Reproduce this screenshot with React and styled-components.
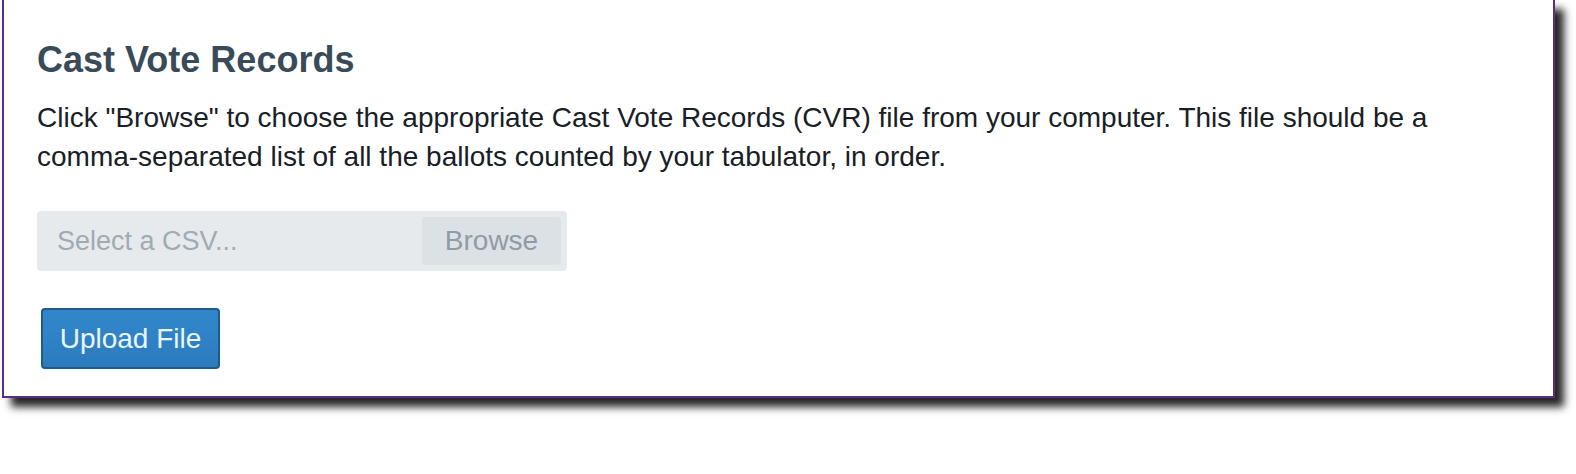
import React from 'react'
import styled, { createGlobalStyle } from 'styled-components'

const GlobalStyle = createGlobalStyle`
  html, body {
    margin: 0;
    padding: 0;
    background: #fff;
  }
  body {
    font-family: "Liberation Sans", Arial, sans-serif;
  }
`

const Page = styled.div`
  width: 1576px;
  height: 474px;
  overflow: hidden;
`

const Card = styled.section`
  box-sizing: border-box;
  margin-left: 2px;
  width: 1553px;
  height: 398px;
  background: #fff;
  border: 2px solid #5b2d82;
  border-top: none;
  box-shadow: 9px 9px 8px rgba(0, 0, 0, 0.85);
  padding: 38px 34px 0 33px;
`

const Title = styled.h2`
  margin: 0;
  font-size: 36px;
  line-height: 44px;
  font-weight: 700;
  color: #394b59;
`

const Text = styled.p`
  margin: 16px 0 0;
  font-size: 28px;
  line-height: 39px;
  color: #182026;
`

const FileInput = styled.label`
  box-sizing: border-box;
  margin-top: 35px;
  width: 530px;
  height: 60px;
  display: flex;
  align-items: center;
  justify-content: space-between;
  padding: 0 6px 0 20px;
  background: #e6eaed;
  border-radius: 4px;
`

const Placeholder = styled.span`
  font-size: 27px;
  color: #a0aab3;
`

const Browse = styled.span`
  box-sizing: border-box;
  width: 139px;
  height: 48px;
  display: flex;
  align-items: center;
  justify-content: center;
  background: #dce1e5;
  border-radius: 4px;
  font-size: 28px;
  color: #8f9ca6;
`

const Button = styled.button`
  box-sizing: border-box;
  margin-top: 37px;
  margin-left: 4px;
  width: 179px;
  height: 61px;
  display: flex;
  align-items: center;
  justify-content: center;
  background: linear-gradient(#3287cc, #2b7cbd);
  border: 2px solid #1e5b8a;
  border-radius: 4px;
  font-family: inherit;
  font-size: 28px;
  color: #eaf6ff;
`

export default function App() {
  return (
    <>
      <GlobalStyle />
      <Page>
        <Card>
          <Title>Cast Vote Records</Title>
          <Text>
            Click "Browse" to choose the appropriate Cast Vote Records (CVR) file from your computer. This file should be a<br />
            comma-separated list of all the ballots counted by your tabulator, in order.
          </Text>
          <FileInput>
            <Placeholder>Select a CSV...</Placeholder>
            <Browse>Browse</Browse>
          </FileInput>
          <Button>Upload File</Button>
        </Card>
      </Page>
    </>
  )
}
